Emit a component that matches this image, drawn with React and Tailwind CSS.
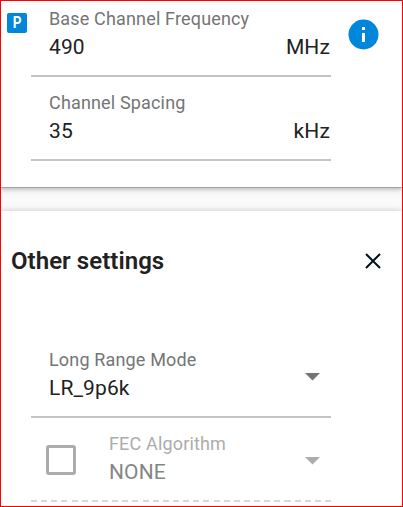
function Field({ label, value, unit, arrow }) {
  return (
    <div className="ml-[30px] flex h-[84px] w-[300px] flex-col border-b-2 border-[#c4c4c4] pl-[18px]">
      <div className="mt-[15px] h-[21px] text-[18px] leading-[21px] tracking-[0.16px] whitespace-nowrap text-[#757575]">{label}</div>
      <div className="mt-[5px] flex h-[26px] justify-between text-[21px] leading-[26px] tracking-[0.12px] text-[#212121]">
        <span>{value}</span>
        {unit && <span className="-mr-px pr-[2px]">{unit}</span>}
        {arrow && <Arrow className="mr-[11px] -mt-[2px] fill-[#757575]" />}
      </div>
    </div>
  );
}

function Arrow({ className }) {
  return (
    <svg width="15" height="8" viewBox="0 0 15 8" className={className}>
      <path d="M0 0h15L7.5 7.5z" />
    </svg>
  );
}

export default function App() {
  return (
    <div className="flex h-[507px] w-[403px] flex-col overflow-hidden border border-[#ff0000] bg-[#fafafa] font-[Roboto,sans-serif]">
      <section className="relative z-10 mt-1 flex h-[182px] shrink-0 bg-white shadow-[0_1px_0_0_rgba(0,0,0,0.2),0_3px_3px_0_rgba(0,0,0,0.16),0_5px_6px_0_rgba(0,0,0,0.06)]">
        <div className="-mt-3">
          <Field label="Base Channel Frequency" value="490" unit="MHz" />
          <Field label="Channel Spacing" value="35" unit="kHz" />
        </div>
        <div className="absolute top-[8px] left-[6px] flex size-5 items-center justify-center rounded-[2px] bg-[#0086db] text-white">
          <span className="scale-x-85 text-[16px] leading-5 font-bold">P</span>
        </div>
        <svg className="mt-[14px] ml-[17px]" width="31" height="31" viewBox="0 0 31 31">
          <circle cx="15.5" cy="15.5" r="15" fill="#0086db" />
          <path d="M14 8h3v3h-3zM14 14h3v9h-3z" fill="white" />
        </svg>
      </section>
      <section className="mt-6 flex h-[295px] shrink-0 flex-col bg-white shadow-[0_0_6px_rgba(0,0,0,0.22)]">
        <header className="flex h-[99px] items-center justify-between pr-[21px] pl-[10px]">
          <h2 className="text-[24px] leading-7 font-semibold tracking-[0.05px] text-[#212121]">Other settings</h2>
          <svg width="16" height="16" viewBox="0 0 16 16" fill="none" stroke="#001120" strokeWidth="2">
            <path d="M1 1l14 14M15 1L1 15" />
          </svg>
        </header>
        <div className="mt-6">
          <Field label="Long Range Mode" value="LR_9p6k" arrow />
          <div className="ml-[30px] flex h-[84px] w-[300px] flex-col">
            <div className="flex h-[82px]">
              <div className="mt-[27px] ml-[15px] size-[30px] rounded-[3px] border-3 border-[#acacac]" />
              <div className="ml-[33px] flex-1">
                <div className="mt-[15px] h-[21px] text-[18px] leading-[21px] tracking-[0.16px] text-[#acacac]">FEC Algorithm</div>
                <div className="mt-[5px] flex h-[26px] justify-between text-[21px] leading-[26px] tracking-[0.12px] text-[#858585]">
                  <span>NONE</span>
                  <Arrow className="mr-[11px] -mt-[2px] fill-[#acacac]" />
                </div>
              </div>
            </div>
            <div className="h-[2px] bg-[repeating-linear-gradient(90deg,#d8d8d8_0px,#d8d8d8_6px,transparent_6px,transparent_10.14px)]" />
          </div>
        </div>
      </section>
    </div>
  );
}
